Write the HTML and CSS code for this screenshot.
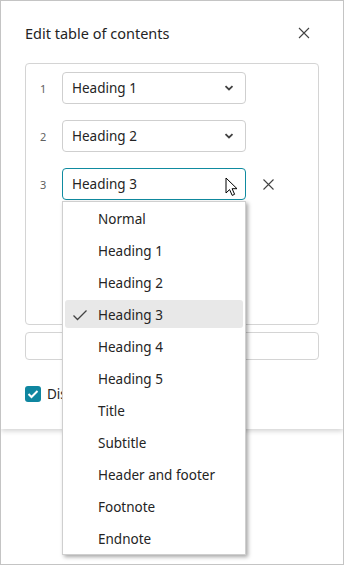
FILE: index.html
```html
<!DOCTYPE html>
<html>
<head>
<meta charset="utf-8">
<link rel="stylesheet" href="styles.css">
</head>
<body>
<div class="frame">
  <div class="dialog">
    <div class="header">
      <div class="title">Edit table of contents</div>
      <svg class="close" width="12" height="12" viewBox="0 0 12 12"><path d="M1 1L11 11M11 1L1 11" stroke="#424242" stroke-width="1.1" fill="none"/></svg>
    </div>
    <div class="box">
      <div class="row">
        <span class="num">1</span>
        <div class="select"><span>Heading 1</span><svg class="chev" width="10" height="6" viewBox="0 0 10 6"><path d="M1.5 1.2L5 4.5L8.5 1.2" stroke="#424242" stroke-width="1.8" fill="none"/></svg></div>
      </div>
      <div class="row">
        <span class="num">2</span>
        <div class="select"><span>Heading 2</span><svg class="chev" width="10" height="6" viewBox="0 0 10 6"><path d="M1.5 1.2L5 4.5L8.5 1.2" stroke="#424242" stroke-width="1.8" fill="none"/></svg></div>
      </div>
      <div class="row">
        <span class="num">3</span>
        <div class="select-wrap">
          <div class="select active"><span>Heading 3</span></div>
          <svg class="cursor" width="14" height="20" viewBox="0 0 14 20"><path d="M1 1L1 16L4.6 12.6L7.2 18.4L9.6 17.3L7.1 11.7L12 11.7Z" fill="#fff" stroke="#000" stroke-width="1" stroke-linejoin="round"/></svg>
          <div class="menu">
            <div class="item">Normal</div>
            <div class="item">Heading 1</div>
            <div class="item">Heading 2</div>
            <div class="item selected"><svg class="check" width="16" height="12" viewBox="0 0 16 12"><path d="M1.5 6.5L5.5 10.5L14.5 1.5" stroke="#424242" stroke-width="1.3" fill="none"/></svg>Heading 3</div>
            <div class="item">Heading 4</div>
            <div class="item">Heading 5</div>
            <div class="item">Title</div>
            <div class="item">Subtitle</div>
            <div class="item">Header and footer</div>
            <div class="item">Footnote</div>
            <div class="item">Endnote</div>
          </div>
        </div>
        <svg class="remove" width="11" height="11" viewBox="0 0 11 11"><path d="M0.5 0.5L10.5 10.5M10.5 0.5L0.5 10.5" stroke="#424242" stroke-width="1.1" fill="none"/></svg>
      </div>
    </div>
    <div class="input"></div>
    <label class="checkrow">
      <span class="checkbox"><svg width="12" height="10" viewBox="0 0 12 10"><path d="M1.5 5L4.5 8L10.5 2" stroke="#fff" stroke-width="2" fill="none"/></svg></span>
      <span class="checklabel">Display page numbers</span>
    </label>
  </div>
</div>
</body>
</html>
```
FILE: styles.css
```css
* { box-sizing: border-box; }
html, body { margin: 0; padding: 0; background: #fff; }
body {
  font-family: "Noto Sans", "Open Sans", sans-serif;
  color: #242424;
}
.frame {
  width: 344px;
  height: 565px;
  border: 1px solid #c4c4c4;
  overflow: hidden;
  position: relative;
}
.dialog {
  height: 428px;
  background: #fff;
  padding: 19px 24px 0 24px;
  box-shadow: 0 2px 5px rgba(0,0,0,0.18);
}
.header {
  display: flex;
  align-items: center;
  justify-content: space-between;
  height: 26px;
  padding-right: 9px;
}
.title {
  font-size: 14.5px;
  line-height: 20px;
}
.box {
  margin-top: 17px;
  height: 262px;
  border: 1px solid #d4d4d4;
  border-radius: 4px;
  padding: 8px 14px;
  display: flex;
  flex-direction: column;
  gap: 16px;
}
.row {
  display: flex;
  align-items: center;
  height: 32px;
}
.num {
  width: 22px;
  font-size: 11px;
  color: #616161;
}
.select-wrap { position: relative; }
.select {
  width: 184px;
  height: 32px;
  border: 1px solid #cfcfcf;
  border-radius: 4px;
  padding: 0 11px 0 9px;
  display: flex;
  align-items: center;
  justify-content: space-between;
  font-size: 13.5px;
}
.select.active { border-color: #0f8ba0; }
.cursor { position: absolute; left: 163px; top: 9px; }
.remove { margin-left: 17px; }
.menu {
  position: absolute;
  left: 0;
  top: 33px;
  width: 184px;
  height: 354px;
  background: #fff;
  border: 1px solid #cfcfcf;
  box-shadow: 2px 2px 4px rgba(0,0,0,0.35);
  padding: 2px;
  display: flex;
  flex-direction: column;
  gap: 4px;
  z-index: 2;
}
.item {
  height: 28px;
  flex: none;
  border-radius: 3px;
  display: flex;
  align-items: center;
  padding-left: 33px;
  padding-top: 1px;
  font-size: 13.5px;
  position: relative;
}
.item.selected { background: #e8e8e8; }
.check { position: absolute; left: 7px; top: 9px; }
.input {
  margin-top: 7px;
  height: 28px;
  border: 1px solid #d4d4d4;
  border-radius: 4px;
}
.checkrow {
  margin-top: 25px;
  display: flex;
  align-items: center;
  gap: 6px;
}
.checkbox {
  width: 16px;
  height: 16px;
  border-radius: 3px;
  background: #0f86a0;
  display: flex;
  align-items: center;
  justify-content: center;
}
.checklabel {
  font-size: 13.5px;
  width: 15px;
  overflow: hidden;
  white-space: nowrap;
}
```
